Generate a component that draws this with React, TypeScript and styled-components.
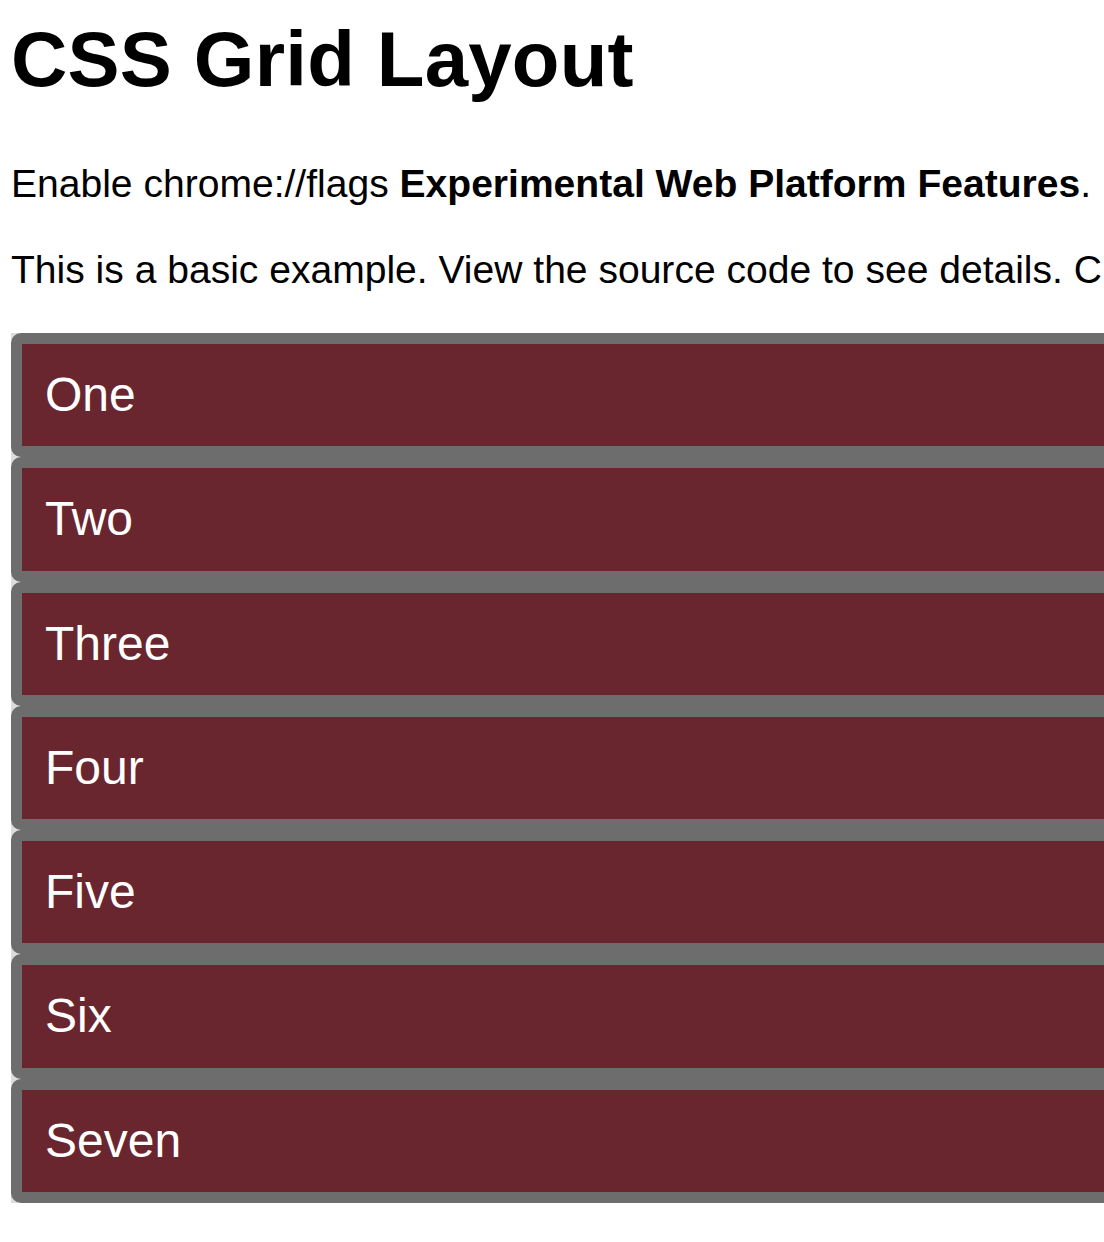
import React from "react";
import styled, { createGlobalStyle } from "styled-components";

const Global = createGlobalStyle`
  html, body {
    margin: 0;
    padding: 0;
    background: #ffffff;
    overflow: hidden;
  }
  body {
    font-family: "Liberation Sans", Arial, sans-serif;
    color: #000;
  }
`;

const Page = styled.div`
  width: 1800px;
  padding: 14px 11px 40px;
  box-sizing: border-box;
`;

const Title = styled.h1`
  margin: 0 0 57px;
  font-size: 78px;
  line-height: 90px;
  font-weight: 700;
  letter-spacing: 0.2px;
`;

const Para = styled.p`
  margin: 0 0 40px;
  font-size: 39.05px;
  line-height: 46px;
  white-space: nowrap;
`;

const Grid = styled.div`
  display: grid;
  grid-template-columns: 1fr;
  background: #dcdcdc;
`;

const Box = styled.div`
  background: #6d6d6d;
  border-radius: 10px;
  padding: 11px;
`;

const Inner = styled.div`
  background: #69262f;
  color: #ffffff;
  font-size: 48px;
  line-height: 54.3px;
  padding: 24px 23px;
`;

const items = ["One", "Two", "Three", "Four", "Five", "Six", "Seven"];

export default function App() {
  return (
    <>
      <Global />
      <Page>
        <Title>CSS Grid Layout</Title>
        <Para>
          Enable chrome://flags <strong>Experimental Web Platform Features</strong>.
        </Para>
        <Para>
          This is a basic example. View the source code to see details. Check out the other examples too.
        </Para>
        <Grid>
          {items.map((t) => (
            <Box key={t}>
              <Inner>{t}</Inner>
            </Box>
          ))}
        </Grid>
      </Page>
    </>
  );
}
